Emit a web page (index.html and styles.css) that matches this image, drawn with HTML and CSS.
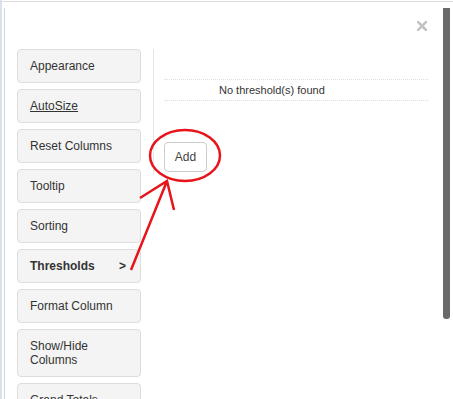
FILE: index.html
```html
<!DOCTYPE html>
<html lang="en">
<head>
    <meta charset="UTF-8">
    <title>Grid Options</title>
    <link rel="stylesheet" href="styles.css">
</head>
<body>
    <div class="window">
        <div class="dialog">
            <button class="close" type="button" aria-label="Close">
                <svg width="10" height="10" viewBox="0 0 10 10">
                    <path d="M1 1 L9 9 M9 1 L1 9" stroke="#c4c4c4" stroke-width="2.6" stroke-linecap="square"/>
                </svg>
            </button>
            <div class="layout">
                <ul class="menu">
                    <li class="item">Appearance</li>
                    <li class="item"><u>AutoSize</u></li>
                    <li class="item">Reset Columns</li>
                    <li class="item">Tooltip</li>
                    <li class="item">Sorting</li>
                    <li class="item active"><span>Thresholds</span><span>&gt;</span></li>
                    <li class="item">Format Column</li>
                    <li class="item">Show/Hide Columns</li>
                    <li class="item">Grand Totals</li>
                </ul>
                <div class="panel">
                    <table class="thresholds">
                        <tr><td class="empty">No threshold(s) found</td></tr>
                    </table>
                    <button class="btn-add" type="button">Add</button>
                </div>
            </div>
            <div class="scrollbar"></div>
        </div>
    </div>
    <!-- annotation drawn over the screenshot -->
    <svg class="markup" width="453" height="399" viewBox="0 0 453 399">
        <ellipse cx="185" cy="155.5" rx="35" ry="25.5" fill="none" stroke="#e8141c" stroke-width="2.5"/>
        <path d="M131 270 L167 181 M140 198 L167 181 L174 210" fill="none" stroke="#e8141c" stroke-width="2.5"/>
    </svg>
</body>
</html>
```

FILE: styles.css
```css
html, body {
    margin: 0;
    padding: 0;
    height: 100%;
    overflow: hidden;
}
body {
    font-family: "Liberation Sans", Arial, sans-serif;
    font-size: 12px;
    color: #333333;
    background: #FFFFFF;
    border-left: 2px solid #DCE2EC;
    box-sizing: border-box;
}
.window {
    margin-top: 1px;
    border-top: 1px solid #DDDDDD;
    height: 100%;
}
.dialog {
    position: relative;
    margin-left: 2px;
    margin-top: 6px;
    border-left: 1px solid #C9D7EC;
    height: 100%;
    padding: 41px 0 0 12px;
    box-sizing: border-box;
}
.close {
    position: absolute;
    top: 13px;
    right: 26px;
    padding: 0;
    border: none;
    background: none;
    width: 10px;
    height: 10px;
    line-height: 0;
}
.layout {
    display: flex;
    align-items: flex-start;
}
.menu {
    list-style: none;
    margin: 0;
    padding: 0;
    width: 124px;
    display: flex;
    flex-direction: column;
    gap: 6px;
}
.item {
    background: #F4F4F4;
    border: 1px solid #DDDDDD;
    border-radius: 4px;
    padding: 9px 12px;
    line-height: 14px;
}
.item.active {
    display: flex;
    justify-content: space-between;
    font-weight: bold;
    padding-right: 14px;
}
.panel {
    margin-left: 12px;
    border-left: 1px solid #E6E6E6;
    padding: 30px 12px 3px 10px;
    width: 264px;
}
.thresholds {
    width: 264px;
    border-collapse: collapse;
}
.thresholds td {
    border-top: 1px dotted #DDDDDD;
    border-bottom: 1px dotted #DDDDDD;
    height: 20px;
    padding: 0 0 0 55px;
    font-size: 11px;
    color: #333333;
}
.btn-add {
    margin-top: 41px;
    width: 43px;
    height: 30px;
    background: #FFFFFF;
    border: 1px solid #CCCCCC;
    border-radius: 4px;
    font-family: "Liberation Sans", Arial, sans-serif;
    font-size: 12px;
    color: #444444;
    padding: 0;
}
.scrollbar {
    position: absolute;
    left: 438px;
    top: 0;
    width: 7px;
    height: 311px;
    background: #6A6A6A;
    border-radius: 0 0 3px 3px;
}
.markup {
    position: absolute;
    left: 0;
    top: 0;
}
```
